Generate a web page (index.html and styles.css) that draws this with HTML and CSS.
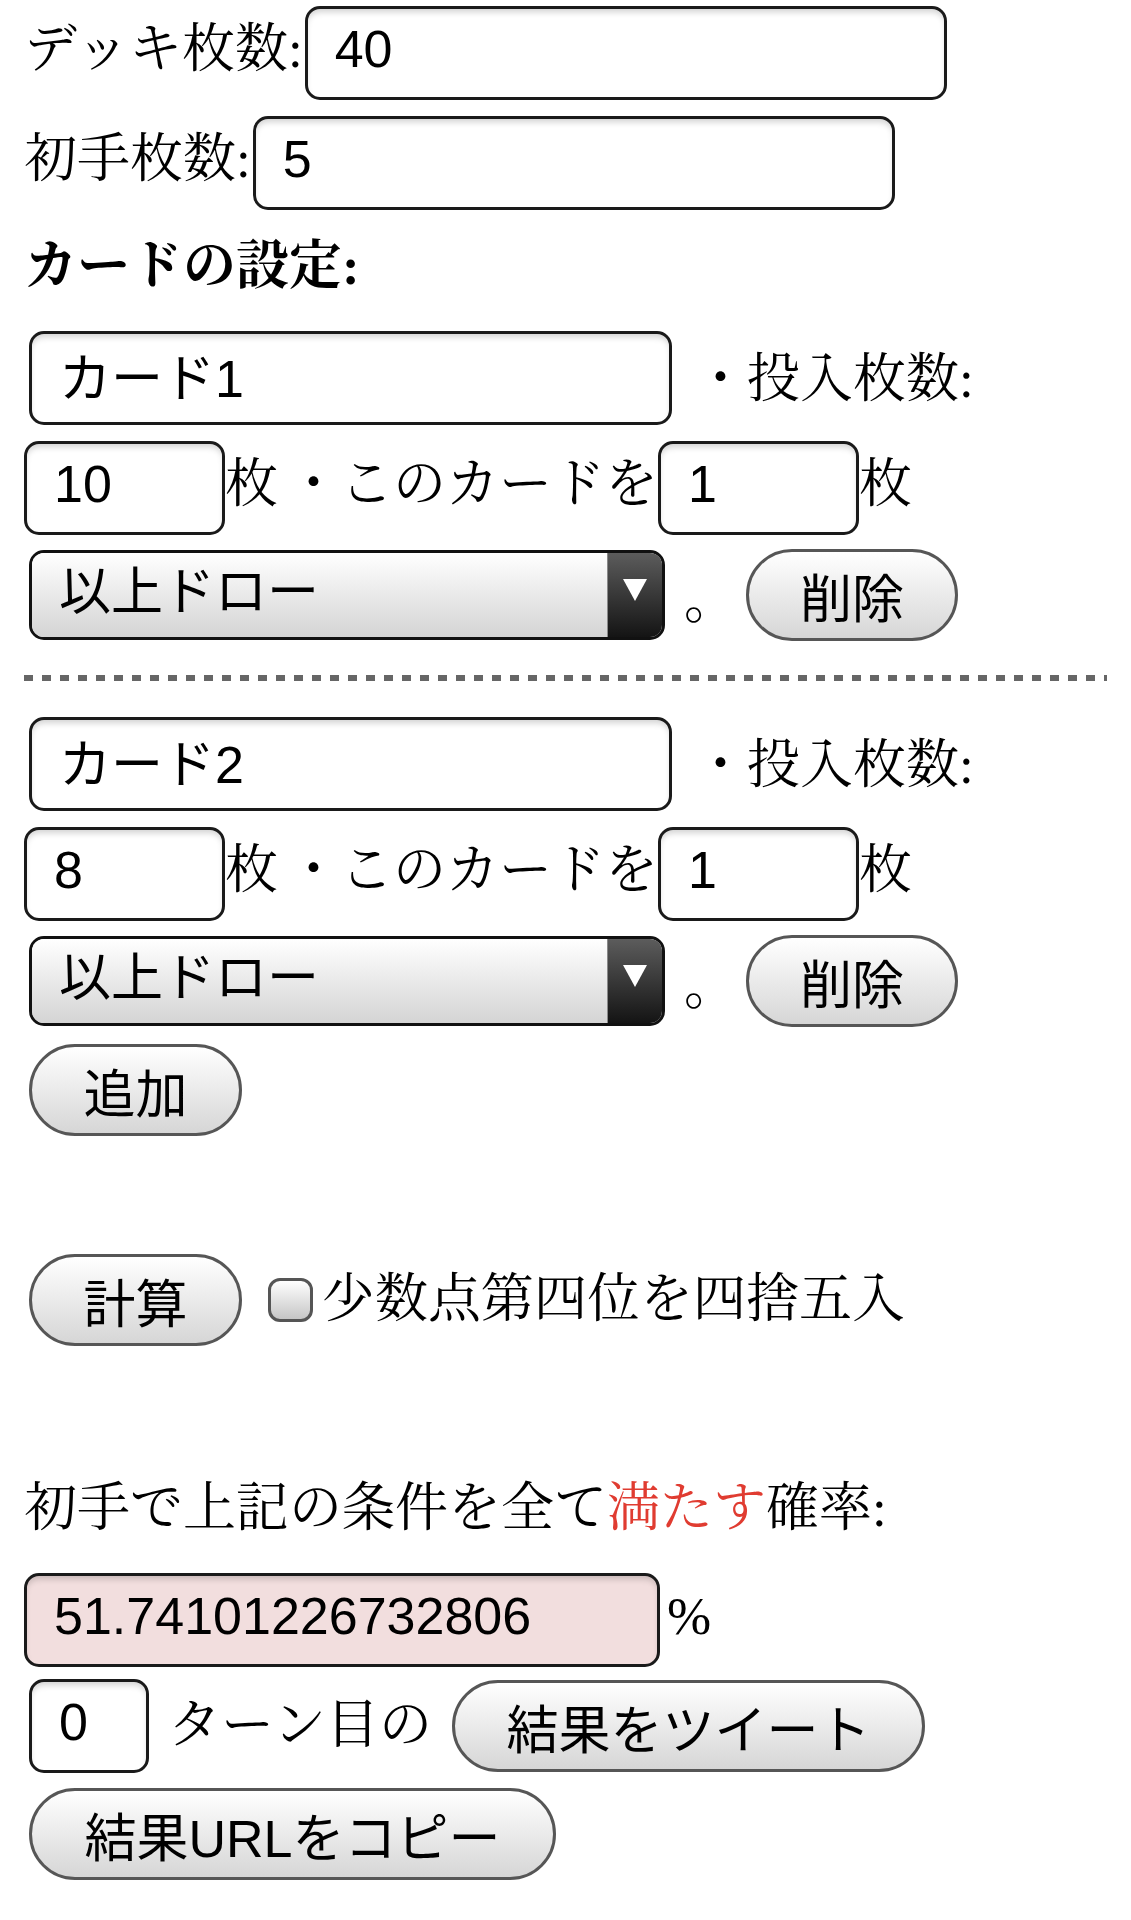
FILE: index.html
```html
<!DOCTYPE html>
<html lang="ja">
<head>
<meta charset="utf-8">
<title>ドロー確率計算</title>
<link rel="stylesheet" href="styles.css">
</head>
<body>
<form class="calc">
  <div class="row first">
    <label class="lbl">デッキ枚数:</label>
    <input class="field w-long" type="text" value="40">
  </div>
  <div class="row">
    <label class="lbl">初手枚数:</label>
    <input class="field w-long" type="text" value="5">
  </div>
  <div class="heading">カードの設定:</div>

  <div class="card">
    <div class="row">
      <input class="field w-name" type="text" value="カード1">
      <span class="lbl gap-l">・投入枚数:</span>
    </div>
    <div class="row r2">
      <input class="field w-num ml0" type="text" value="10">
      <span class="lbl">枚</span>
      <span class="lbl gap-m">・このカードを</span>
      <input class="field w-num ml0" type="text" value="1">
      <span class="lbl">枚</span>
    </div>
    <div class="row r3">
      <span class="select-box">
        <select class="sel"><option>以上ドロー</option></select>
        <span class="arrow"><span class="tri"></span></span>
      </span>
      <span class="lbl maru">。</span>
      <button type="button" class="btn">削除</button>
    </div>
  </div>
  <div class="sep"></div>
  <div class="card">
    <div class="row">
      <input class="field w-name" type="text" value="カード2">
      <span class="lbl gap-l">・投入枚数:</span>
    </div>
    <div class="row r2">
      <input class="field w-num ml0" type="text" value="8">
      <span class="lbl">枚</span>
      <span class="lbl gap-m">・このカードを</span>
      <input class="field w-num ml0" type="text" value="1">
      <span class="lbl">枚</span>
    </div>
    <div class="row r3">
      <span class="select-box">
        <select class="sel"><option>以上ドロー</option></select>
        <span class="arrow"><span class="tri"></span></span>
      </span>
      <span class="lbl maru">。</span>
      <button type="button" class="btn">削除</button>
    </div>
  </div>
  <div class="row add-row">
    <button type="button" class="btn">追加</button>
  </div>

  <div class="row calc-row">
    <button type="button" class="btn">計算</button>
    <input class="chk" type="checkbox" id="round">
    <label class="lbl" for="round">少数点第四位を四捨五入</label>
  </div>

  <div class="result-label">初手で上記の条件を全て<span class="red">満たす</span>確率:</div>
  <div class="row">
    <input class="field w-res result" type="text" value="51.74101226732806">
    <span class="lbl pct">%</span>
  </div>
  <div class="row turn-row">
    <input class="field w-turn" type="text" value="0">
    <span class="lbl gap-t">ターン目の</span>
    <button type="button" class="btn tweet">結果をツイート</button>
  </div>
  <div class="row copy-row">
    <button type="button" class="btn">結果URLをコピー</button>
  </div>
</form>
</body>
</html>
```
FILE: styles.css
```css
html, body {
  margin: 0;
  padding: 0;
  background: #fff;
}
body {
  padding: 6px 24px 0 24px;
  font-family: "Liberation Serif", "Noto Serif CJK JP", "Noto Sans CJK JP", serif;
  font-size: 53px;
  color: #000;
}
.calc {
  margin: 0;
}
.row {
  display: flex;
  align-items: baseline;
  margin-top: 16px;
}
.row.first {
  margin-top: 0;
}
.row.r2 {
  margin-top: 16px;
}
.row.r3 {
  margin-top: 14px;
  align-items: center;
}
.card .row:first-child {
  margin-top: 0;
}
.lbl {
  font-family: "Liberation Serif", "Noto Serif CJK JP", "Noto Sans CJK JP", serif;
  font-size: 53px;
  line-height: 1.2;
  white-space: nowrap;
}
.gap-l {
  margin-left: 22px;
}
.gap-m {
  margin-left: 9px;
}
.gap-t {
  margin-left: 19px;
}
.field {
  box-sizing: border-box;
  height: 94px;
  margin: 0 0 0 2px;
  padding: 0 16px 8px 27px;
  border: 3px solid #1a1a1a;
  border-radius: 15px;
  background: #fff;
  box-shadow: inset 0 5px 6px -2px rgba(0, 0, 0, 0.18);
  font-family: "Liberation Sans", "Noto Sans CJK JP", sans-serif;
  font-size: 52px;
  color: #000;
  outline: none;
}
.ml0 {
  margin-left: 0;
}
.w-long {
  width: 642px;
}
.w-name {
  width: 643px;
  margin-left: 5px;
}
.w-num {
  width: 201px;
}
.w-res {
  width: 636px;
  margin-left: 0;
}
.w-turn {
  width: 120px;
  margin-left: 5px;
}
.result {
  background: #f2dede;
}
.heading {
  margin: 26px 0 35px 0;
  line-height: 60px;
  font-size: 53px;
  font-weight: 700;
  white-space: nowrap;
}
.select-box {
  box-sizing: border-box;
  display: flex;
  width: 636px;
  height: 90px;
  margin-left: 5px;
  border: 3px solid #111;
  border-radius: 15px;
  overflow: hidden;
}
.sel {
  flex: 1;
  -webkit-appearance: none;
  appearance: none;
  margin: 0;
  border: 0;
  border-radius: 0;
  padding: 0 0 6px 27px;
  background: linear-gradient(#ffffff, #d4d4d4);
  font-family: "Liberation Sans", "Noto Sans CJK JP", sans-serif;
  font-size: 52px;
  color: #000;
  outline: none;
}
.arrow {
  display: flex;
  justify-content: center;
  align-items: flex-start;
  width: 55px;
  padding-top: 26px;
  box-sizing: border-box;
  background: linear-gradient(#5c5c5c, #141414);
  border-left: 1px solid #8a8a8a;
}
.tri {
  width: 0;
  height: 0;
  border-left: 12px solid transparent;
  border-right: 12px solid transparent;
  border-top: 22px solid #fff;
}
.maru {
  margin-left: 19px;
}
.r3 .maru {
  align-self: center;
  margin-top: 12px;
}
.btn {
  box-sizing: border-box;
  height: 92px;
  margin: 0 0 0 9px;
  padding: 0 51px;
  border: 3px solid #565656;
  border-radius: 46px;
  background: linear-gradient(#ffffff, #d6d6d6);
  font-family: "Liberation Sans", "Noto Sans CJK JP", sans-serif;
  font-size: 52px;
  color: #000;
  white-space: nowrap;
}
.add-row .btn,
.calc-row .btn,
.copy-row .btn {
  margin-left: 5px;
  width: 213px;
}
.copy-row .btn {
  width: 527px;
}
.tweet {
  width: 473px;
  margin-left: 20px;
}
.sep {
  height: 6px;
  margin: 34px 0 36px 0;
  background: repeating-linear-gradient(90deg, #666 0 9px, transparent 9px 18px);
}
.add-row {
  margin-top: 17px;
}
.calc-row {
  margin-top: 118px;
  align-items: center;
}
.chk {
  -webkit-appearance: none;
  appearance: none;
  box-sizing: border-box;
  width: 45px;
  height: 44px;
  margin: 0 9px 0 26px;
  border: 3px solid #555;
  border-radius: 12px;
  background: linear-gradient(#ffffff, #c6c6c6);
}
.result-label {
  margin: 132px 0 35px 0;
  line-height: 60px;
  white-space: nowrap;
}
.red {
  color: #e03c31;
}
.pct {
  margin-left: 7px;
}
.turn-row {
  margin-top: 12px;
  align-items: center;
}
.copy-row {
  margin-top: 15px;
}
```
